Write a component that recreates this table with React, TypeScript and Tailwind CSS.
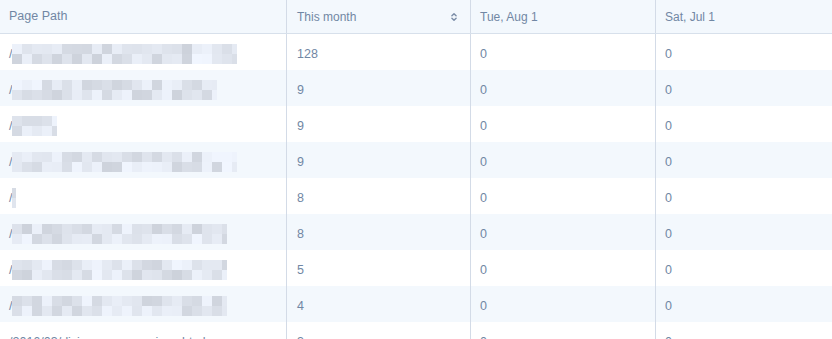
import { ChevronsUpDown } from "lucide-react";

type Row = { path?: string; blur: number; month: number; aug: number; jul: number };

const rows: Row[] = [
  { blur: 225, month: 128, aug: 0, jul: 0 },
  { blur: 205, month: 9, aug: 0, jul: 0 },
  { blur: 45, month: 9, aug: 0, jul: 0 },
  { blur: 225, month: 9, aug: 0, jul: 0 },
  { blur: 4, month: 8, aug: 0, jul: 0 },
  { blur: 215, month: 8, aug: 0, jul: 0 },
  { blur: 215, month: 5, aug: 0, jul: 0 },
  { blur: 215, month: 4, aug: 0, jul: 0 },
  { path: "/2016/03/divice-vs-comparison.html", blur: 0, month: 3, aug: 0, jul: 0 },
];

// cheap deterministic noise so the mosaic looks like a pixelated blur
function shade(seed: number): string {
  const v = Math.abs(Math.sin(seed * 12.9898) * 43758.5453) % 1;
  const l = Math.round(212 + v * 36);
  return `rgb(${l - 7}, ${l - 2}, ${Math.min(255, l + 7)})`;
}

function Mosaic({ width, seed }: { width: number; seed: number }) {
  const cols = Math.max(1, Math.ceil(width / 10));
  return (
    <div className="flex flex-col" style={{ width }}>
      {[0, 1].map((r) => (
        <div key={r} className="flex h-[10px] overflow-hidden">
          {Array.from({ length: cols }).map((_, c) => (
            <div
              key={c}
              className="h-full w-[10px] shrink-0"
              style={{ background: shade(seed * 97 + r * 31 + c * 7) }}
            />
          ))}
        </div>
      ))}
    </div>
  );
}

const cell = "flex items-center px-[9px] border-l border-[#d3dbe7]";

export default function App() {
  return (
    <div className="h-[339px] w-[832px] overflow-hidden bg-white font-['Liberation_Sans',Arial,sans-serif] text-[12px] text-[#7187a4]">
      <div className="grid h-[34px] grid-cols-[286px_184px_185px_1fr] border-b border-[#d7e0eb] bg-[#f3f8fd]">
        <div className="flex items-center px-[9px] text-[12.5px]">Page Path</div>
        <div className={`${cell} justify-between pl-[10px] pr-[11px]`}>
          <span>This month</span>
          <ChevronsUpDown size={10} strokeWidth={3.5} className="text-[#7c8ea8]" />
        </div>
        <div className={cell}>Tue, Aug 1</div>
        <div className={cell}>Sat, Jul 1</div>
      </div>
      {rows.map((row, i) => (
        <div
          key={i}
          className={`grid h-[36px] grid-cols-[286px_184px_185px_1fr] text-[12.5px] ${i % 2 === 1 ? "bg-[#f3f8fd]" : "bg-white"}`}
        >
          <div className="flex items-center px-[9px] pt-[4px]">
            {row.path ? (
              <span>{row.path}</span>
            ) : (
              <>
                <span>/</span>
                {row.blur > 0 && <Mosaic width={row.blur} seed={i + 1} />}
              </>
            )}
          </div>
          <div className={`${cell} pt-[4px] pl-[10px]`}>{row.month}</div>
          <div className={`${cell} pt-[4px]`}>{row.aug}</div>
          <div className={`${cell} pt-[4px]`}>{row.jul}</div>
        </div>
      ))}
    </div>
  );
}
